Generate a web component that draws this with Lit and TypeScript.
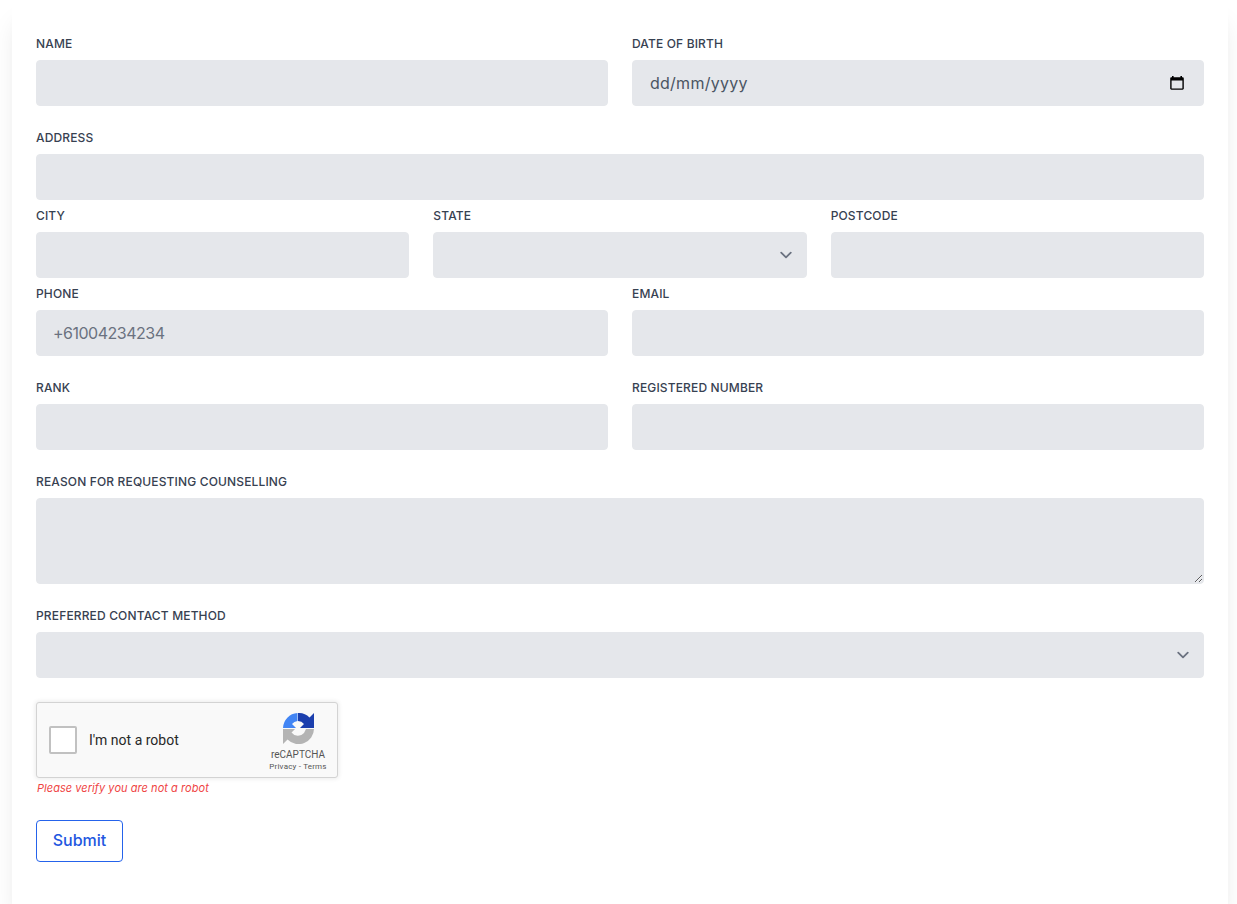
import { LitElement, html, css } from "lit";
import { customElement } from "lit/decorators.js";

const chevron = `url("data:image/svg+xml,%3Csvg xmlns='http://www.w3.org/2000/svg' fill='none' viewBox='0 0 20 20'%3E%3Cpath stroke='%236b7280' stroke-linecap='round' stroke-linejoin='round' stroke-width='1.5' d='M6 8l4 4 4-4'/%3E%3C/svg%3E")`;

@customElement("app-root")
export class AppRoot extends LitElement {
  static styles = css`
    :host {
      display: block;
      background: #fff;
      font-family: Inter, "Liberation Sans", sans-serif;
      color: #374151;
    }
    * { box-sizing: border-box; }
    .card {
      margin: 0 9px 0 12px;
      height: 904px;
      padding: 36px 24px 0;
      background: #fff;
      box-shadow: 0 20px 25px -5px rgba(0,0,0,.1), 0 10px 10px -5px rgba(0,0,0,.04);
      display: flex;
      flex-direction: column;
    }
    .row { display: grid; gap: 24px; }
    .two { grid-template-columns: 1fr 1fr; }
    .three { grid-template-columns: 1fr 1fr 1fr; }
    .one { grid-template-columns: 1fr; }
    .mb24 { margin-bottom: 24px; }
    .mb8 { margin-bottom: 8px; }
    label {
      display: block;
      font-size: 12px;
      line-height: 16px;
      font-weight: 450;
      letter-spacing: .15px;
      color: #374151;
      text-transform: uppercase;
      margin-bottom: 8px;
    }
    input, select, textarea, .date {
      display: block;
      width: 100%;
      height: 46px;
      background-color: #e5e7eb;
      border: 1px solid #e5e7eb;
      border-radius: 4px;
      padding: 12px 16px;
      font: 400 16px/20px Inter, "Liberation Sans", sans-serif;
      color: #374151;
      outline: none;
    }
    input::placeholder { color: #6b7280; letter-spacing: -.5px; }
    select {
      appearance: none;
      background-image: ${css([chevron] as any as TemplateStringsArray)};
      background-position: right 8px center;
      background-repeat: no-repeat;
      background-size: 24px 24px;
    }
    textarea { height: 86px; resize: vertical; }
    .date {
      display: flex;
      align-items: center;
      justify-content: space-between;
      color: #4b5563;
      padding-left: 17px;
      padding-right: 18px;
      letter-spacing: .25px;
    }
    .date svg { width: 16px; height: 16px; flex: none; }
    .captcha {
      width: 302px;
      height: 76px;
      background: #f9f9f9;
      border: 1px solid #d3d3d3;
      border-radius: 3px;
      box-shadow: 0 0 4px 1px rgba(0,0,0,.08);
      display: flex;
      align-items: center;
      padding-left: 12px;
      font-family: Roboto, "Liberation Sans", sans-serif;
      color: #000;
    }
    .box {
      width: 28px;
      height: 28px;
      background: #fff;
      border: 2px solid #c1c1c1;
      border-radius: 2px;
      flex: none;
    }
    .robot { font-size: 14px; margin-left: 12px; color: #282828; flex: 1; }
    .brand {
      width: 70px;
      margin-right: 4px;
      align-self: flex-start;
      padding-top: 10px;
      display: flex;
      flex-direction: column;
      align-items: center;
      color: #555;
    }
    .brand svg { width: 31px; height: 31px; margin-bottom: 5px; }
    .brand .n { font-size: 10px; line-height: 12px; }
    .brand .t { font-size: 8px; line-height: 12px; letter-spacing: .2px; white-space: nowrap; }
    .err {
      font-size: 11px;
      line-height: 16px;
      font-style: italic;
      letter-spacing: .05px;
      color: #ef4444;
      margin: 2px 0 0 1px;
    }
    button {
      align-self: flex-start;
      margin-top: 24px;
      width: 87px;
      height: 42px;
      background: #fff;
      border: 1px solid #2563eb;
      border-radius: 4px;
      color: #2256e0;
      font: 500 16px/24px Inter, "Liberation Sans", sans-serif;
      padding: 0 0 2px;
    }
  `;

  render() {
    return html`<form class="card" @submit=${(e: Event) => e.preventDefault()}>
      <div class="row two mb24">
        <div><label>Name</label><input /></div>
        <div><label>Date of birth</label>
          <div class="date"><span>dd/mm/yyyy</span>
            <svg viewBox="0 0 16 16"><path fill="#000" d="M3 1h1.600v1.200h6.800V1H13v1.200h.6c.6 0 1.200.6 1.200 1.200v10.200c0 .6-.6 1.200-1.200 1.200H2.400c-.6 0-1.200-.6-1.200-1.200V3.400c0-.6.6-1.200 1.200-1.200H3zM2.600 5.600v8h10.800v-8z"/></svg>
          </div>
        </div>
      </div>
      <div class="row one mb8"><div><label>Address</label><input /></div></div>
      <div class="row three mb8">
        <div><label>City</label><input /></div>
        <div><label>State</label><select></select></div>
        <div><label>Postcode</label><input /></div>
      </div>
      <div class="row two mb24">
        <div><label>Phone</label><input placeholder="+61004234234" /></div>
        <div><label>Email</label><input /></div>
      </div>
      <div class="row two mb24">
        <div><label>Rank</label><input /></div>
        <div><label>Registered number</label><input /></div>
      </div>
      <div class="row one mb24"><div><label>Reason for requesting counselling</label><textarea></textarea></div></div>
      <div class="row one mb24"><div><label>Preferred contact method</label><select></select></div></div>
      <div class="captcha">
        <div class="box"></div>
        <div class="robot">I'm not a robot</div>
        <div class="brand">
          <svg viewBox="0 0 31 31">
            <path fill="#b4b4b4" d="M0 16h12l-3.500 3.500a8 8 0 0 0 12.500.5l2-4h8a15.500 15.500 0 0 1-26.500 10.500L0 31z"/>
            <path fill="#1c3fae" d="M15 0a15.500 15.500 0 0 1 11.500 4.500L31 0v15H17l4-4a8 8 0 0 0-6-3z"/>
            <path fill="#4285f4" d="M0 15A15.500 15.500 0 0 1 14.500 0v8A8 8 0 0 0 9 11l4 4z"/>
          </svg>
          <div class="n">reCAPTCHA</div>
          <div class="t">Privacy - Terms</div>
        </div>
      </div>
      <div class="err">Please verify you are not a robot</div>
      <button type="button">Submit</button>
    </form>`;
  }
}
